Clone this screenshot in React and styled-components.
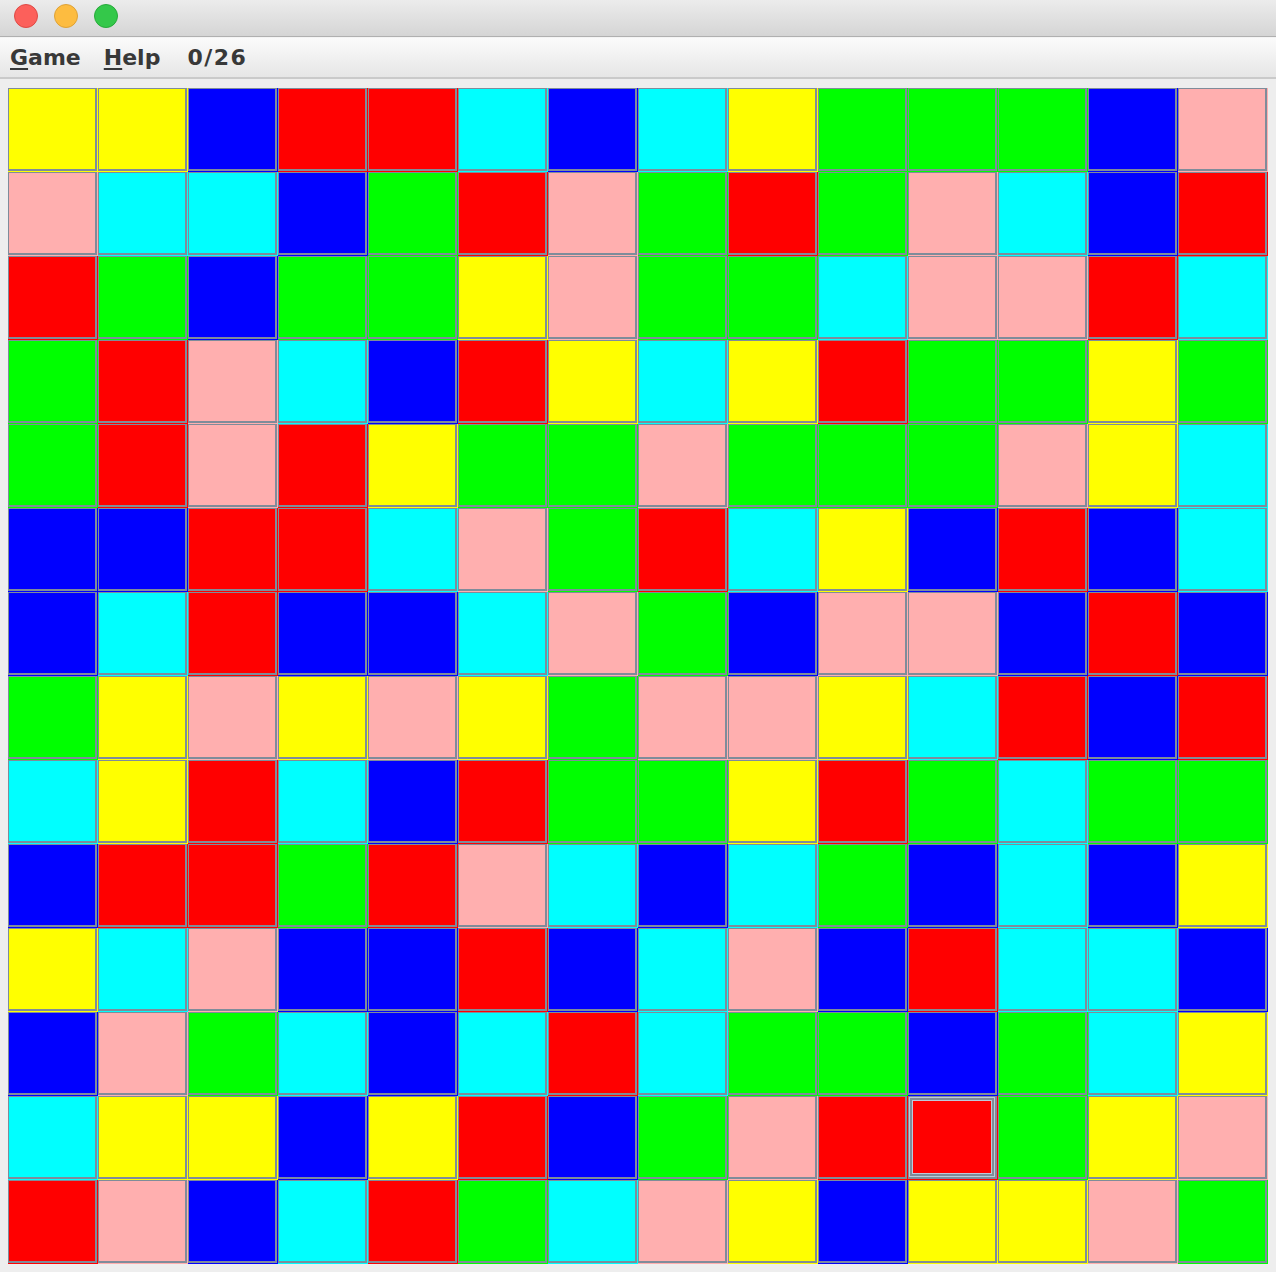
import styled, { createGlobalStyle } from "styled-components";

const GlobalStyle = createGlobalStyle`
  html, body {
    margin: 0;
    padding: 0;
    background: #eeeeee;
  }
`;

const COLORS = {
  Y: "#ffff00",
  B: "#0000ff",
  R: "#ff0000",
  C: "#00ffff",
  G: "#00ff00",
  P: "#ffafaf",
};

const BOARD = [
  "YYBRRCBCYGGGBP",
  "PCCBGRPGRGPCBR",
  "RGBGGYPGGCPPRC",
  "GRPCBRYCYRGGYG",
  "GRPRYGGPGGGPYC",
  "BBRRCPGRCYBRBC",
  "BCRBBCPGBPPBRB",
  "GYPYPYGPPYCRBR",
  "CYRCBRGGYRGCGG",
  "BRRGRPCBCGBCBY",
  "YCPBBRBCPBRCCB",
  "BPGCBCRCGGBGCY",
  "CYYBYRBGPRRGYP",
  "RPBCRGCPYBYYPG",
];

const SELECTED = { row: 12, col: 10 };

const Window = styled.div`
  width: 1276px;
  height: 1272px;
  display: flex;
  flex-direction: column;
  background: #eeeeee;
  overflow: hidden;
`;

const TitleBar = styled.div`
  height: 37px;
  flex-shrink: 0;
  box-sizing: border-box;
  display: flex;
  align-items: flex-start;
  gap: 16px;
  padding: 4px 0 0 14px;
  background: linear-gradient(#ececec, #d5d5d5);
  border-bottom: 1px solid #b0b0b0;
`;

const Light = styled.span`
  width: 24px;
  height: 24px;
  border-radius: 50%;
  box-sizing: border-box;
  background: ${(p) => p.$fill};
  border: 1px solid ${(p) => p.$edge};
`;

const MenuBar = styled.div`
  height: 39px;
  flex-shrink: 0;
  display: flex;
  align-items: center;
  padding-left: 10px;
  background: linear-gradient(#fbfbfb, #e6e6e6);
  border-top: 1px solid #f4f4f4;
  border-bottom: 2px solid #cacaca;
  font-family: "DejaVu Sans", "Liberation Sans", sans-serif;
  font-weight: bold;
  font-size: 22px;
  color: #383838;
`;

const MenuItem = styled.span`
  margin-right: ${(p) => p.$gap}px;
  letter-spacing: ${(p) => p.$spacing || 0}px;
  line-height: 1;
`;

const Mnemonic = styled.span`
  text-decoration: underline;
  text-decoration-thickness: 2px;
  text-underline-offset: 3px;
`;

const Board = styled.div`
  display: grid;
  grid-template-columns: repeat(14, 90px);
  grid-template-rows: repeat(14, 84px);
  padding: 9px 0 0 8px;
`;

const Cell = styled.div`
  background: ${(p) => p.$color};
  padding: 0 1px 1px 0;
  box-sizing: border-box;
  display: flex;
`;

const Face = styled.div`
  flex: 1;
  box-sizing: border-box;
  border: 1px solid #7f8c9a;
  border-right-width: 2px;
  border-bottom-width: 2px;
  background: ${(p) => p.$color};
  box-shadow: ${(p) =>
    p.$selected
      ? "inset 0 0 0 1px #bccadb, inset 0 0 0 3px #7f8c9a, inset 0 0 0 4px #bccadb"
      : "none"};
`;

export default function App() {
  return (
    <Window>
      <GlobalStyle />
      <TitleBar>
        <Light $fill="#fc605b" $edge="#de4a45" />
        <Light $fill="#fdbc40" $edge="#dea236" />
        <Light $fill="#34c84a" $edge="#27aa3a" />
      </TitleBar>
      <MenuBar>
        <MenuItem $gap={23}>
          <Mnemonic>G</Mnemonic>ame
        </MenuItem>
        <MenuItem $gap={27}>
          <Mnemonic>H</Mnemonic>elp
        </MenuItem>
        <MenuItem $gap={0} $spacing={1.5}>
          0/26
        </MenuItem>
      </MenuBar>
      <Board>
        {BOARD.map((line, r) =>
          line.split("").map((c, col) => {
            const color = COLORS[c];
            const selected = r === SELECTED.row && col === SELECTED.col;
            return (
              <Cell key={r + "-" + col} $color={color}>
                <Face $color={color} $selected={selected} />
              </Cell>
            );
          })
        )}
      </Board>
    </Window>
  );
}
